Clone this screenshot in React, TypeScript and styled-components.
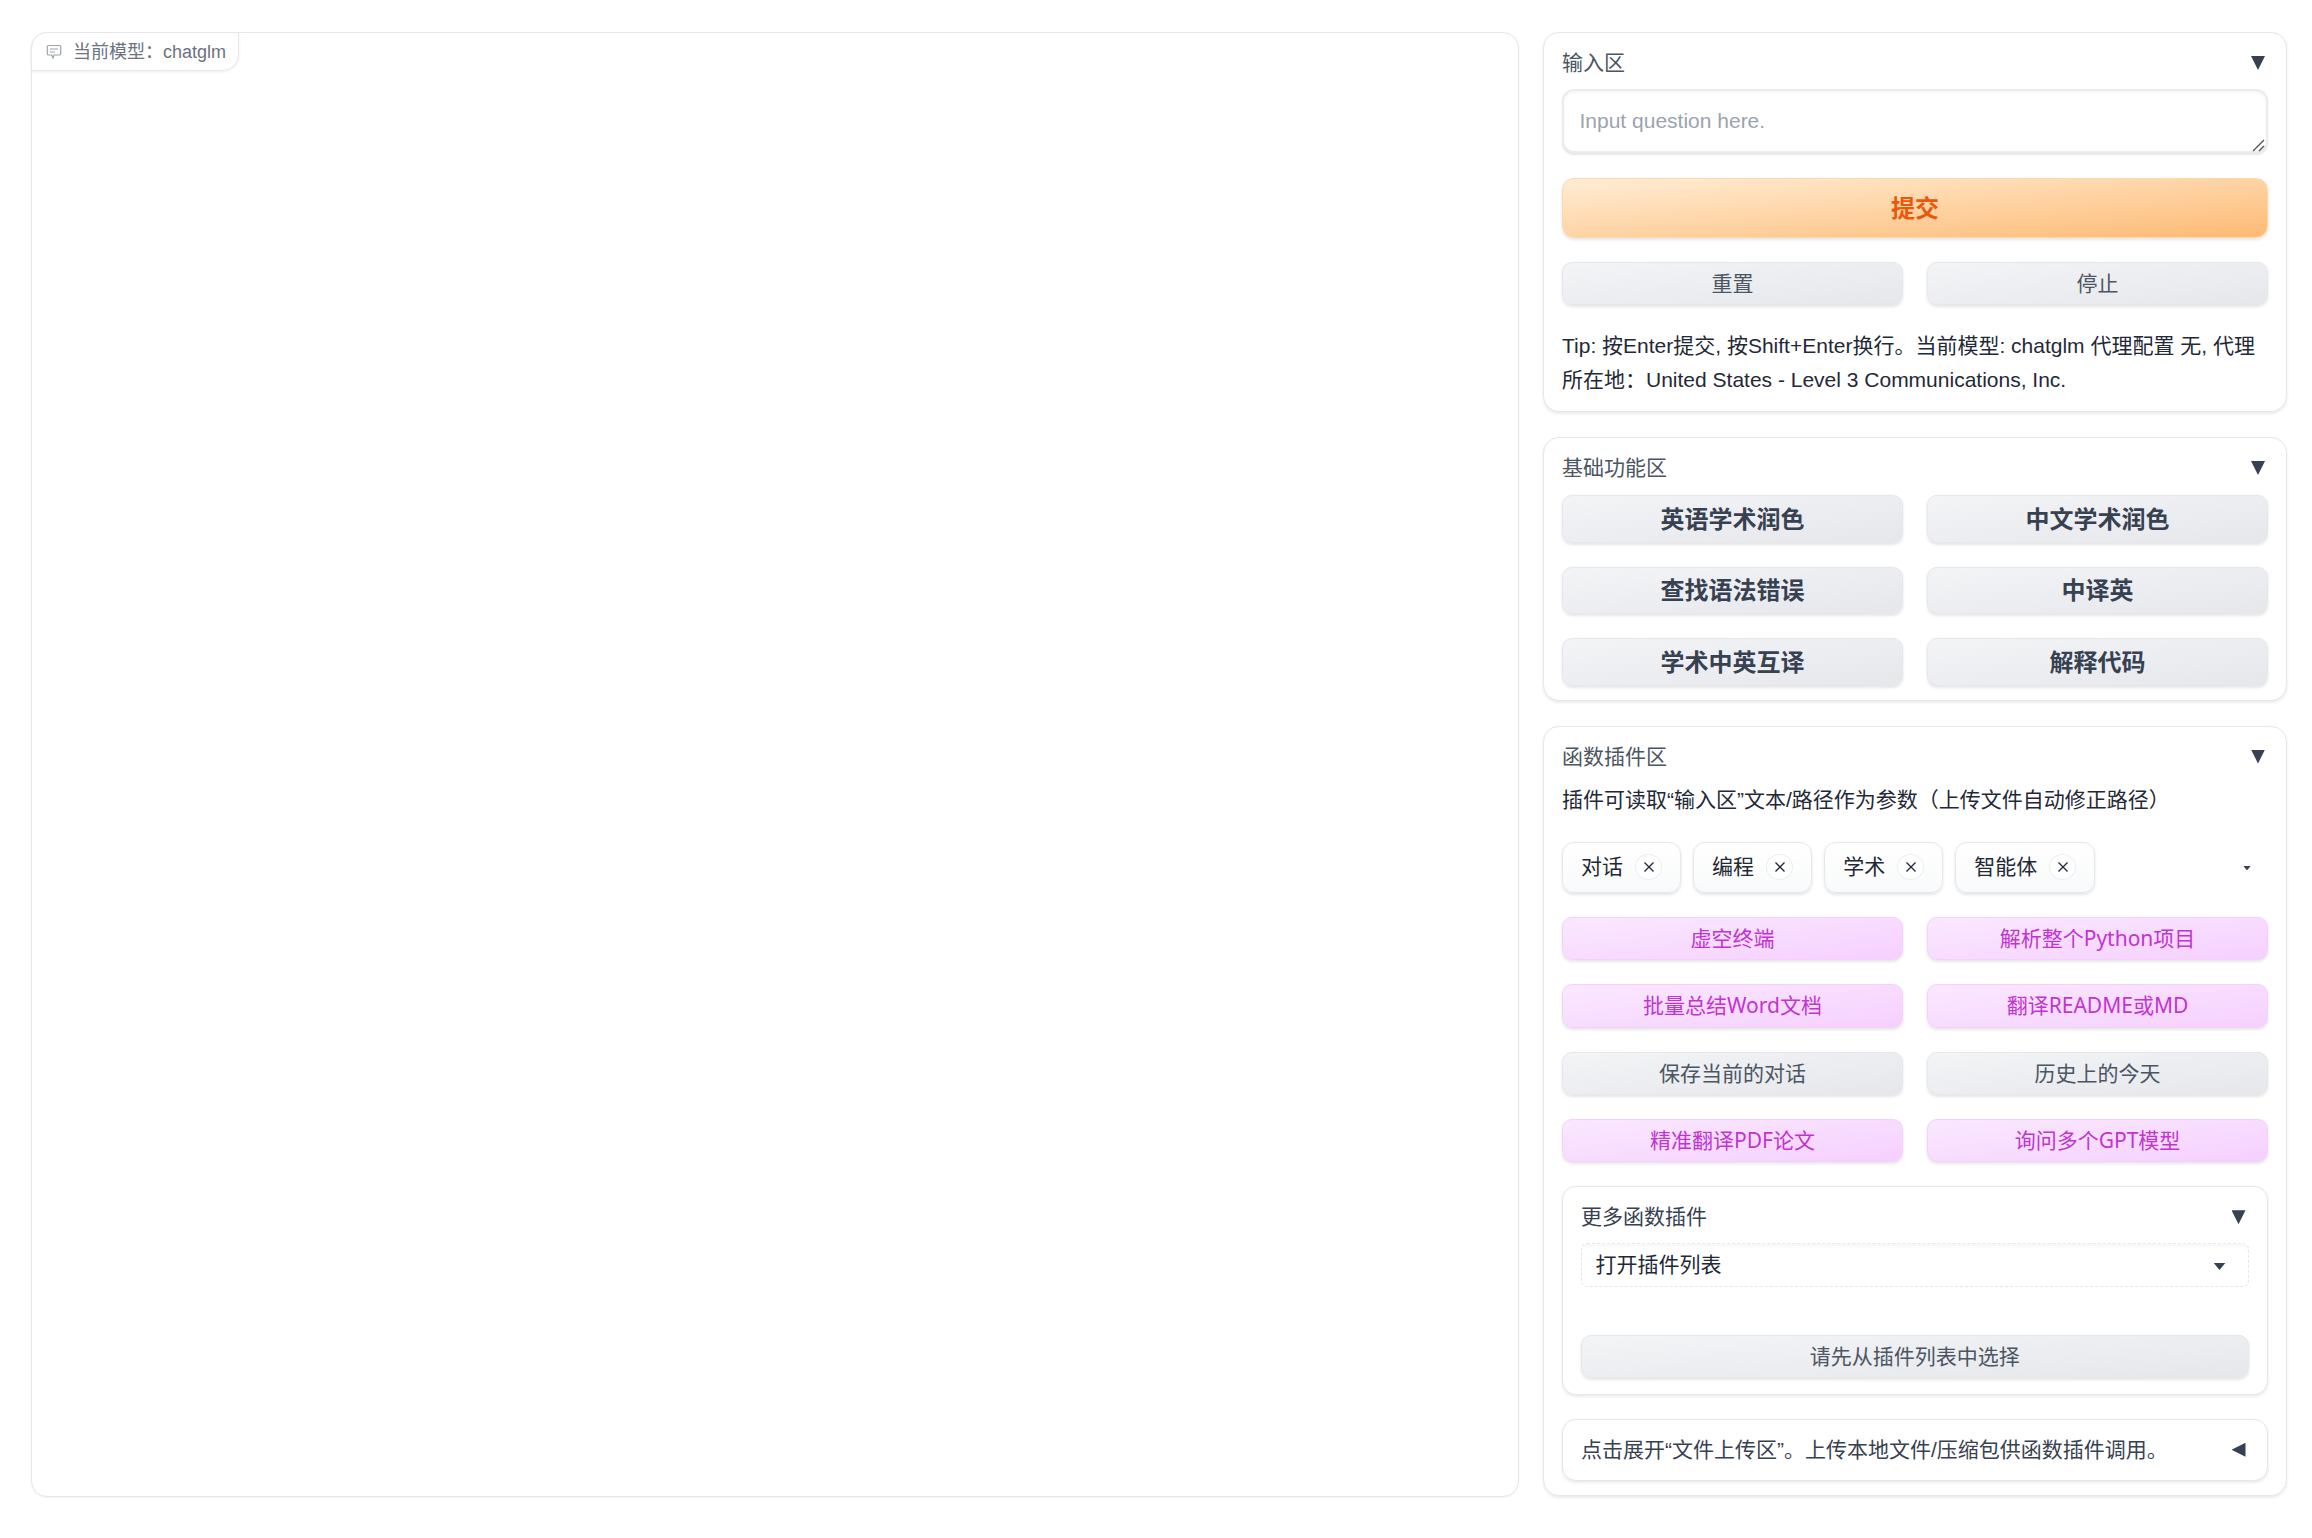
import React from "react";
import styled, { createGlobalStyle } from "styled-components";

const sans = `"Liberation Sans", "Noto Sans CJK SC", sans-serif`;
const cjk = `"Noto Sans CJK SC", "Noto Sans", sans-serif`;
const mixed = `"Noto Sans", "Noto Sans CJK SC", sans-serif`;

const Global = createGlobalStyle`
  html, body { margin: 0; padding: 0; background: #fff; }
  * { box-sizing: border-box; }
`;

const Page = styled.div`
  display: grid;
  grid-template-columns: 1488px 744px;
  column-gap: 24px;
  padding: 32px 25px 0 31px;
  width: 2312px;
  height: 1538px;
  font-family: ${sans};
  font-size: 21px;
  color: #1f2937;
`;

const ChatPanel = styled.div`
  position: relative;
  height: 1465px;
  border: 1px solid #e5e7eb;
  border-radius: 16px;
  background: #fff;
  box-shadow: 0 1px 2px rgba(0, 0, 0, 0.05);
`;

const ChatLabel = styled.div`
  position: absolute;
  left: -1px;
  top: -1px;
  width: 208px;
  height: 39px;
  display: flex;
  align-items: center;
  gap: 11px;
  padding: 0 0 4px 14px;
  border: 1px solid #e5e7eb;
  border-radius: 16px 0 16px 0;
  background: #fff;
  box-shadow: 0 1px 3px rgba(0, 0, 0, 0.06);
  font-size: 18px;
  color: #6b7280;
`;

const ChatIcon = styled.svg`
  margin-top: 5px;
`;

const Side = styled.div`
  display: flex;
  flex-direction: column;
  gap: 25px;
`;

const Panel = styled.section`
  border: 1px solid #e5e7eb;
  border-radius: 16px;
  background: #fff;
  padding: 15px 18px 14px;
  box-shadow: 0 1.5px 3px rgba(0, 0, 0, 0.08);
`;

const Header = styled.div`
  display: flex;
  align-items: center;
  justify-content: space-between;
  height: 28px;
  padding: 0 3px 2px 0;
  color: #4b5563;
`;

const Tri = styled.span<{ $left?: boolean }>`
  display: block;
  width: 14px;
  height: 14px;
  margin-top: 4px;
  background: #374151;
  clip-path: ${(p) =>
    p.$left ? "polygon(100% 0, 100% 100%, 0 50%)" : "polygon(0 0, 100% 0, 50% 100%)"};
`;

const TextBox = styled.div`
  position: relative;
  height: 64px;
  margin-top: 13px;
  padding: 16px 15.5px 0;
  line-height: 28px;
  color: #9ca3af;
  border: 2px solid #ebecee;
  border-radius: 12px;
  background: #fff;
  box-shadow: inset 0 2px 3px rgba(0, 0, 0, 0.04), 0 1.5px 2px rgba(0, 0, 0, 0.1);
`;

const Grip = styled.svg`
  position: absolute;
  right: 1px;
  bottom: -1px;
`;

const Submit = styled.button`
  display: block;
  width: 100%;
  height: 60px;
  margin-top: 25px;
  padding: 0 0 3px;
  border: 1px solid #fed7aa;
  border-radius: 12px;
  background: linear-gradient(to bottom right, #ffedd5, #fdba74);
  box-shadow: 0 1.5px 3px rgba(0, 0, 0, 0.1);
  color: #ea580c;
  font-family: ${sans};
  font-size: 24px;
  font-weight: 700;
`;

const Two = styled.div<{ $gap: number; $top: number }>`
  display: grid;
  grid-template-columns: 1fr 1fr;
  column-gap: 24px;
  row-gap: ${(p) => p.$gap}px;
  margin-top: ${(p) => p.$top}px;
`;

const Btn = styled.button<{ $h: number; $big?: boolean; $purple?: boolean }>`
  display: block;
  width: 100%;
  height: ${(p) => p.$h}px;
  padding: 0 0 3px;
  border: 1px solid ${(p) => (p.$purple ? "#f5d0fe" : "#e5e7eb")};
  border-radius: 10px;
  background: ${(p) =>
    p.$purple
      ? "linear-gradient(to bottom right, #fae8ff, #f5d0fe)"
      : "linear-gradient(to bottom right, #f3f4f6, #e5e7eb)"};
  box-shadow: 0 1.5px 3px rgba(0, 0, 0, 0.1);
  color: ${(p) => (p.$purple ? "#c134d2" : p.$big ? "#374151" : "#4b5563")};
  font-family: ${(p) => (p.$big ? sans : mixed)};
  font-size: ${(p) => (p.$big ? 24 : 21)}px;
  font-weight: ${(p) => (p.$big ? 700 : 400)};
`;

const Tip = styled.p`
  margin: 24px 0 0;
  line-height: 34px;
  color: #1f2937;
`;

const Note = styled.p`
  margin: 13px 0 0;
  line-height: 34px;
  color: #1f2937;
`;

const ChipRow = styled.div`
  display: flex;
  align-items: center;
  gap: 12.6px;
  margin-top: 25px;
  height: 51px;
  padding-right: 17px;
`;

const Chip = styled.span`
  display: flex;
  align-items: center;
  gap: 12px;
  height: 51px;
  padding: 0 18.5px 0 18px;
  border: 1px solid #e5e7eb;
  border-radius: 12px;
  background: linear-gradient(to bottom, #fff, #f9fafb);
  box-shadow: 0 1.5px 3px rgba(0, 0, 0, 0.1);
  color: #1f2937;
`;

const ChipText = styled.span`
  margin-bottom: 4px;
  font-family: ${cjk};
`;

const Close = styled.span`
  display: flex;
  align-items: center;
  justify-content: center;
  width: 27px;
  height: 26px;
  margin-right: -1px;
  border: 1px solid #eceef1;
  border-radius: 50%;
  background: #fff;
`;

const Caret = styled.span<{ $w: number; $top: number }>`
  display: block;
  width: ${(p) => p.$w}px;
  height: ${(p) => p.$w * 0.6}px;
  margin-top: ${(p) => p.$top}px;
  background: #374151;
  clip-path: polygon(0 0, 100% 0, 50% 100%);
`;

const Spacer = styled.span`
  flex: 1;
`;

const Inner = styled.div`
  margin-top: 24px;
  padding: 15.5px 18.5px 16px 18px;
  border: 1px solid #e5e7eb;
  border-radius: 14px;
  background: #fff;
  box-shadow: 0 1.5px 3px rgba(0, 0, 0, 0.08);
  color: #374151;
`;

const InnerHeader = styled(Header)`
  padding-bottom: 3px;
  color: #374151;
`;

const Select = styled.div`
  display: flex;
  align-items: center;
  justify-content: space-between;
  height: 44px;
  margin-top: 12px;
  padding: 0 22px 4px 13.5px;
  border: 1px dashed #e5e7eb;
  border-radius: 6px;
  box-shadow: inset 0 4px 3px -1px rgba(0, 0, 0, 0.03);
  font-family: ${cjk};
  color: #1f2937;
`;

const InnerBtnWrap = styled.div`
  margin-top: 48px;
`;

const Fold = styled(Inner)`
  display: flex;
  align-items: center;
  justify-content: space-between;
  height: 62px;
  margin-top: 24px;
  padding: 0 21.5px 4px 18px;
`;

const basics = ["英语学术润色", "中文学术润色", "查找语法错误", "中译英", "学术中英互译", "解释代码"];
const tags = ["对话", "编程", "学术", "智能体"];
const plugins: [string, boolean][] = [
  ["虚空终端", true],
  ["解析整个Python项目", true],
  ["批量总结Word文档", true],
  ["翻译README或MD", true],
  ["保存当前的对话", false],
  ["历史上的今天", false],
  ["精准翻译PDF论文", true],
  ["询问多个GPT模型", true],
];

export default function App() {
  return (
    <Page>
      <Global />
      <ChatPanel>
        <ChatLabel>
          <ChatIcon width="16" height="16" viewBox="0 0 16 16" fill="none" stroke="#9ca3af" strokeWidth="1.2">
            <path d="M2.5 1.5h11a1.2 1.2 0 0 1 1.2 1.2v7.1a1.2 1.2 0 0 1-1.2 1.2H8l-1 3-1.2-3H2.5a1.2 1.2 0 0 1-1.2-1.2V2.700a1.200 1.200 0 0 1 1.200-1.200z" />
            <path d="M4 5h8M4 8h5" />
          </ChatIcon>
          当前模型：chatglm
        </ChatLabel>
      </ChatPanel>
      <Side>
        <Panel>
          <Header>
            输入区
            <Tri />
          </Header>
          <TextBox>
            Input question here.
            <Grip width="14" height="14" viewBox="0 0 14 14" fill="none" stroke="#555" strokeWidth="1.4">
              <path d="M2 13 13 2M8 13l5-5" />
            </Grip>
          </TextBox>
          <Submit>提交</Submit>
          <Two $gap={24} $top={24}>
            <Btn $h={43}>重置</Btn>
            <Btn $h={43}>停止</Btn>
          </Two>
          <Tip>
            Tip: 按Enter提交, 按Shift+Enter换行。当前模型: chatglm 代理配置 无, 代理
            <br />
            所在地：United States - Level 3 Communications, Inc.
          </Tip>
        </Panel>
        <Panel>
          <Header>
            基础功能区
            <Tri />
          </Header>
          <Two $gap={24} $top={14}>
            {basics.map((b) => (
              <Btn key={b} $h={47.5} $big>
                {b}
              </Btn>
            ))}
          </Two>
        </Panel>
        <Panel>
          <Header>
            函数插件区
            <Tri />
          </Header>
          <Note>插件可读取“输入区”文本/路径作为参数（上传文件自动修正路径）</Note>
          <ChipRow>
            {tags.map((t) => (
              <Chip key={t}>
                <ChipText>{t}</ChipText>
                <Close>
                  <svg width="12" height="12" viewBox="0 0 12 12" stroke="#1f2937" strokeWidth="1.3">
                    <path d="M1.500 1.500l9 9M10.500 1.500l-9 9" />
                  </svg>
                </Close>
              </Chip>
            ))}
            <Spacer />
            <Caret $w={8} $top={2} />
          </ChipRow>
          <Two $gap={24} $top={24.5}>
            {plugins.map(([p, purple]) => (
              <Btn key={p} $h={43.3} $purple={purple}>
                {p}
              </Btn>
            ))}
          </Two>
          <Inner>
            <InnerHeader>
              更多函数插件
              <Tri />
            </InnerHeader>
            <Select>
              打开插件列表
              <Caret $w={12} $top={7.4} />
            </Select>
            <InnerBtnWrap>
              <Btn $h={43}>请先从插件列表中选择</Btn>
            </InnerBtnWrap>
          </Inner>
          <Fold>
            点击展开“文件上传区”。上传本地文件/压缩包供函数插件调用。
            <Tri $left />
          </Fold>
        </Panel>
      </Side>
    </Page>
  );
}
